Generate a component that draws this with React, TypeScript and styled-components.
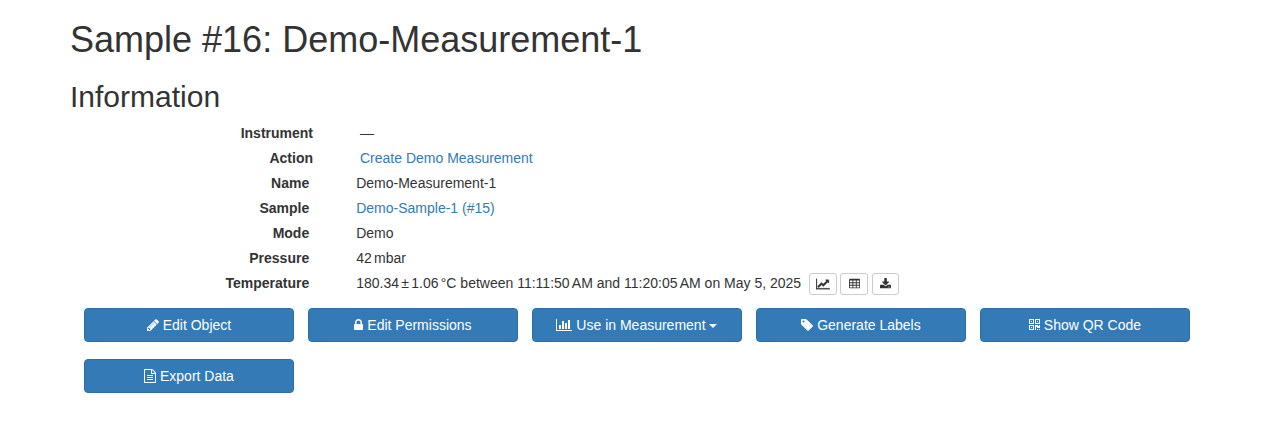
import React from "react";
import styled, { createGlobalStyle } from "styled-components";

const GlobalStyle = createGlobalStyle`
  * { box-sizing: border-box; }
  body {
    margin: 0;
    background: #fff;
    color: #333;
    font: 14px/20px "Liberation Sans", Arial, sans-serif;
  }
`;

const Container = styled.main`
  width: 1170px;
  margin: 0 auto;
  padding: 20px 15px 0;
`;

const Title = styled.h1`
  margin: 0;
  font-size: 36px;
  font-weight: normal;
  line-height: 39px;
`;

const Subtitle = styled.h2`
  margin: 21px 0 7px;
  font-size: 30px;
  font-weight: normal;
  line-height: 33px;
`;

const Row = styled.div<{ $indent?: boolean }>`
  display: flex;
  height: 25px;
  padding: 3px 0 2px ${(p) => (p.$indent ? 4 : 0.2)}px;
`;

const Label = styled.div`
  width: 239px;
  margin-right: 47px;
  text-align: right;
  font-weight: bold;
`;

const Value = styled.div`
  display: flex;
  white-space: nowrap;
`;

const ThinSpace = styled.span`
  letter-spacing: -0.55px;
`;

const Link = styled.a`
  color: #337ab7;
  text-decoration: none;
`;

const Tools = styled.div`
  display: flex;
  gap: 3.9px;
  height: 22px;
  margin-left: 8px;
`;

const ToolButton = styled.button`
  display: flex;
  align-items: flex-start;
  justify-content: center;
  width: 27.4px;
  height: 22px;
  padding: 4px 0 0;
  border: 1px solid #ccc;
  border-radius: 3px;
  background: #fff;
  color: #333;
`;

const Actions = styled.div`
  display: grid;
  grid-template-columns: repeat(5, 210px);
  column-gap: 14px;
  row-gap: 17px;
  padding: 13px 0 0 14px;
`;

const ActionButton = styled.button`
  display: flex;
  align-items: center;
  justify-content: center;
  height: 34px;
  padding: 0;
  border: 1px solid #2e6da4;
  border-radius: 4px;
  background: #337ab7;
  color: #fff;
  font: inherit;
  white-space: pre;
`;

const Caret = styled.span`
  margin: 2px 1px 0 3px;
  border-top: 4px solid;
  border-right: 4px solid transparent;
  border-left: 4px solid transparent;
`;

const Glyph = styled.svg`
  display: block;
  flex: none;
  fill: currentColor;
`;

const icons = {
  pencil: { x: 128, w: 1536, d: "M491 1536l91-91-235-235-91 91v107h128v128h107zm523-928q0-22-22-22-10 0-17 7l-542 542q-7 7-7 17 0 22 22 22 10 0 17-7l542-542q7-7 7-17zm-54-192l416 416-832 832h-416v-416zm683 96q0 53-37 90l-166 166-416-416 166-165q36-38 90-38 53 0 91 38l235 234q37 39 37 91z" },
  lock: { x: 320, w: 1152, d: "M640 768h512v-192q0-106-75-181t-181-75-181 75-75 181v192zm832 96v576q0 40-28 68t-68 28h-960q-40 0-68-28t-28-68v-576q0-40 28-68t68-28h32v-192q0-184 132-316t316-132 316 132 132 316v192h32q40 0 68 28t28 68z" },
  bars: { x: 0, w: 2048, d: "M640 896v512h-256v-512h256zm384-512v1024h-256v-1024h256zm1024 1152v128h-2048v-1536h128v1408h1920zm-640-896v768h-256v-768h256zm384-384v1152h-256v-1152h256z" },
  tag: { x: 128, w: 1536, d: "M576 448q0-53-37.5-90.5t-90.5-37.5-90.5 37.5-37.5 90.5 37.5 90.5 90.5 37.5 90.5-37.5 37.5-90.5zm1067 576q0 53-37 90l-491 492q-39 37-91 37-53 0-90-37l-715-716q-38-37-64.5-101t-26.5-117v-416q0-52 38-90t90-38h416q53 0 117 26.5t102 64.5l715 714q37 39 37 91z" },
  qr: { x: 0, w: 1408, d: "M384 1152v128h-128v-128h128zm0-768v128h-128v-128h128zm768 0v128h-128v-128h128zm-1024 1024h384v-384h-384v384zm0-768h384v-384h-384v384zm768 0h384v-384h-384v384zm-256 256v640h-640v-640h640zm512 512v128h-128v-128h128zm256 0v128h-128v-128h128zm0-512v384h-384v-128h-128v384h-128v-640h384v128h128v-128h128zm-768-768v640h-640v-640h640zm768 0v640h-640v-640h640z" },
  file: { x: 128, w: 1536, d: "M1596 380q28 28 48 76t20 88v1152q0 40-28 68t-68 28h-1344q-40 0-68-28t-28-68v-1600q0-40 28-68t68-28h896q40 0 88 20t76 48zm-444-244v376h376q-10-29-22-41l-313-313q-12-12-41-22zm384 1528v-1024h-416q-40 0-68-28t-28-68v-416h-768v1536h1280zm-1024-864q0-14 9-23t23-9h704q14 0 23 9t9 23v64q0 14-9 23t-23 9h-704q-14 0-23-9t-9-23v-64zm736 224q14 0 23 9t9 23v64q0 14-9 23t-23 9h-704q-14 0-23-9t-9-23v-64q0-14 9-23t23-9h704zm0 256q14 0 23 9t9 23v64q0 14-9 23t-23 9h-704q-14 0-23-9t-9-23v-64q0-14 9-23t23-9h704z" },
  line: { x: 0, w: 2048, d: "M2048 1536v128h-2048v-1536h128v1408h1920zm-128-1248v435q0 21-19.5 29.5t-35.5-7.5l-121-121-633 633q-10 10-23 10t-23-10l-233-233-416 416-192-192 585-585q10-10 23-10t23 10l233 233 464-464-121-121q-16-16-7.5-35.5t29.5-19.5h435q14 0 23 9t9 23z" },
  table: { x: 0, w: 1664, d: "M160 128h1344q66 0 113 47t47 113v1088q0 66-47 113t-113 47h-1344q-66 0-113-47t-47-113v-1088q0-66 47-113t113-47zm-32 256v256h384v-256zm512 0v256h384v-256zm512 0v256h384v-256zm-1024 384v256h384v-256zm512 0v256h384v-256zm512 0v256h384v-256zm-1024 384v256h384v-256zm512 0v256h384v-256zm512 0v256h384v-256z" },
  download: { x: 64, w: 1664, d: "M1344 1344q0-26-19-45t-45-19-45 19-19 45 19 45 45 19 45-19 19-45zm256 0q0-26-19-45t-45-19-45 19-19 45 19 45 45 19 45-19 19-45zm128-224v320q0 40-28 68t-68 28h-1472q-40 0-68-28t-28-68v-320q0-40 28-68t68-28h465l135 136q58 56 136 56t136-56l136-136h464q40 0 68 28t28 68zm-325-569q17 41-14 70l-448 448q-18 19-45 19t-45-19l-448-448q-31-29-14-70 17-39 59-39h256v-448q0-26 19-45t45-19h256q26 0 45 19t19 45v448h256q42 0 59 39z" },
};

type IconName = keyof typeof icons;

function Icon({ name, size = 14 }: { name: IconName; size?: number }) {
  const { x, w, d } = icons[name];
  const bold = name === "line";
  return (
    <Glyph width={(w / 1792) * size} height={size} viewBox={`${x} 0 ${w} 1792`} aria-hidden>
      <path
        fillRule={name === "table" ? "evenodd" : "nonzero"}
        stroke={bold ? "currentColor" : "none"}
        strokeWidth={bold ? 50 : 0}
        d={d}
      />
    </Glyph>
  );
}

/* Sets each thin space of a quantity a little tighter than the font does. */
function Quantity({ text }: { text: string }) {
  return (
    <span>
      {text.split("\u2009").map((part, i) => (
        <React.Fragment key={i}>
          {i > 0 && <ThinSpace>{"\u2009"}</ThinSpace>}
          {part}
        </React.Fragment>
      ))}
    </span>
  );
}

const fields: { label: string; value: string; link?: boolean; indent?: boolean }[] = [
  { label: "Instrument", value: "—", indent: true },
  { label: "Action", value: "Create Demo Measurement", link: true, indent: true },
  { label: "Name", value: "Demo-Measurement-1" },
  { label: "Sample", value: "Demo-Sample-1 (#15)", link: true },
  { label: "Mode", value: "Demo" },
  { label: "Pressure", value: "42\u2009mbar" },
];

const actions: { icon: IconName; text: string; caret?: boolean }[] = [
  { icon: "pencil", text: "Edit Object" },
  { icon: "lock", text: "Edit Permissions" },
  { icon: "bars", text: "Use in Measurement", caret: true },
  { icon: "tag", text: "Generate Labels" },
  { icon: "qr", text: "Show QR Code" },
  { icon: "file", text: "Export Data" },
];

export default function App() {
  return (
    <>
      <GlobalStyle />
      <Container>
        <Title>Sample #16: Demo-Measurement-1</Title>
        <Subtitle>Information</Subtitle>
        {fields.map((f) => (
          <Row key={f.label} $indent={f.indent}>
            <Label>{f.label}</Label>
            <Value>{f.link ? <Link href="#">{f.value}</Link> : <Quantity text={f.value} />}</Value>
          </Row>
        ))}
        <Row>
          <Label>Temperature</Label>
          <Value>
            <Quantity text={"180.34\u2009±\u20091.06\u2009°C between 11:11:50\u2009AM and 11:20:05\u2009AM on May 5, 2025"} />
            <Tools>
              <ToolButton aria-label="Plot"><Icon name="line" size={12} /></ToolButton>
              <ToolButton aria-label="Table"><Icon name="table" size={12} /></ToolButton>
              <ToolButton aria-label="Download"><Icon name="download" size={12} /></ToolButton>
            </Tools>
          </Value>
        </Row>
        <Actions>
          {actions.map((a) => (
            <ActionButton key={a.text}>
              <Icon name={a.icon} />
              <span>{" " + a.text}</span>
              {a.caret && <Caret />}
            </ActionButton>
          ))}
        </Actions>
      </Container>
    </>
  );
}
